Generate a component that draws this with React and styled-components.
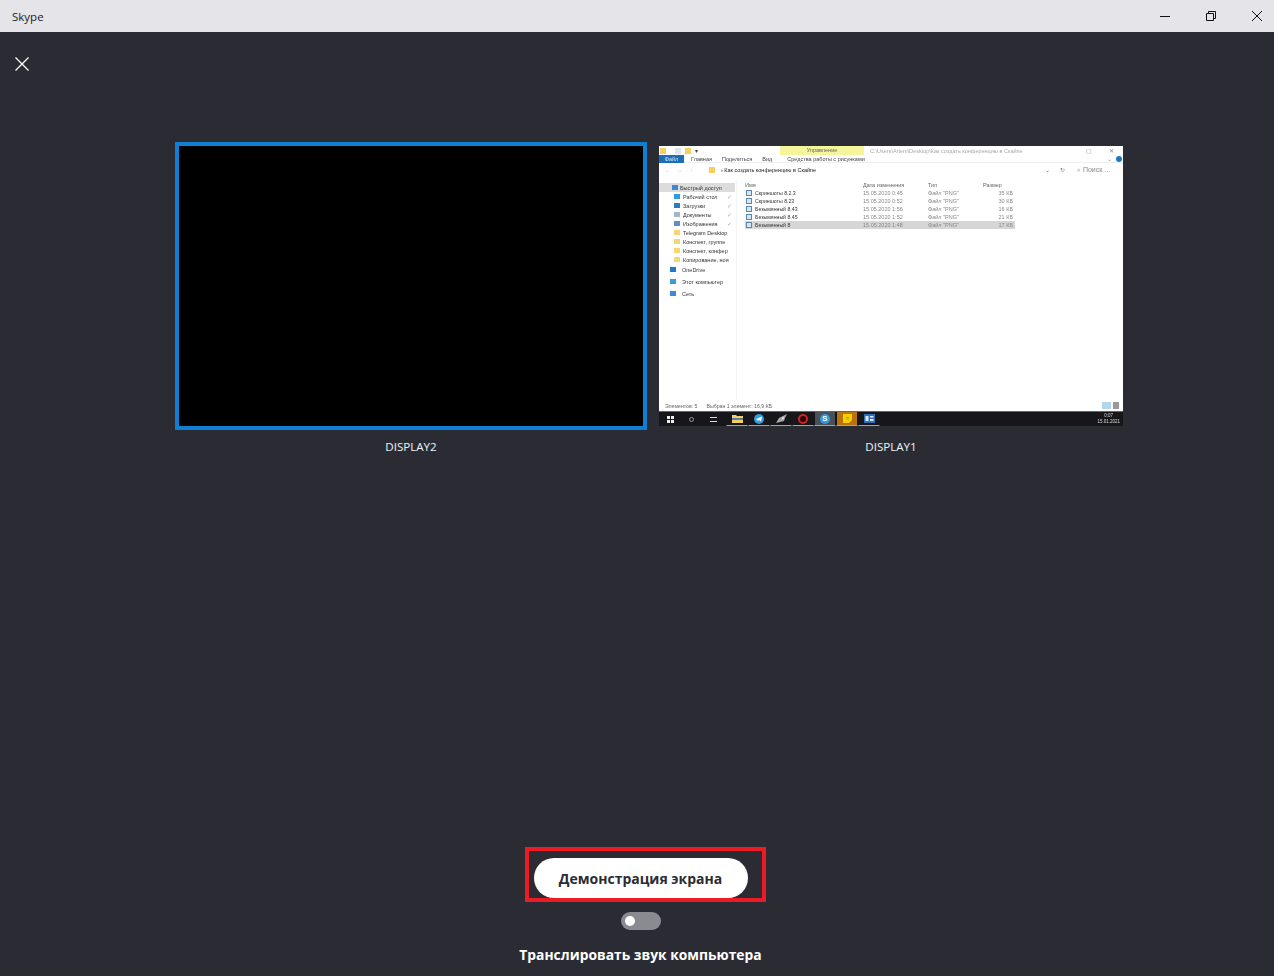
import styled, { createGlobalStyle } from "styled-components"

const sideItems = [
    { label: "Быстрый доступ", color: "#3b8ad8", level: 0, active: true },
    { label: "Рабочий стол", color: "#2f9be0", level: 1, pin: true },
    { label: "Загрузки", color: "#2b7cc8", level: 1, pin: true },
    { label: "Документы", color: "#9fb8cc", level: 1, pin: true },
    { label: "Изображения", color: "#5d90c0", level: 1, pin: true },
    { label: "Telegram Desktop", color: "#f4d774", level: 1 },
    { label: "Конспект, группе", color: "#f4d774", level: 1 },
    { label: "Конспект, конфер", color: "#f4d774", level: 1 },
    { label: "Копирование, ноя", color: "#f4d774", level: 1 },
]

const sideBottom = [
    { label: "OneDrive", color: "#1f78c8", level: 2, space: 1 },
    { label: "Этот компьютер", color: "#3b9bd8", level: 2, space: 3 },
    { label: "Сеть", color: "#3b8ad8", level: 2, space: 3 },
]

const files = [
    { name: "Скриншоты 8.2.3", date: "15.05.2020 0:45", size: "35 КБ" },
    { name: "Скриншоты 8.23", date: "15.05.2020 0:52", size: "30 КБ" },
    { name: "Безымянный 8.43", date: "15.05.2020 1:56", size: "16 КБ" },
    { name: "Безымянный 8.45", date: "15.05.2020 1:52", size: "21 КБ" },
    { name: "Безымянный 8", date: "15.05.2020 1:48", size: "17 КБ", selected: true },
]

const FolderGlyph = () => (
    <svg width="11" height="9" viewBox="0 0 11 9">
        <path d="M0 1h4l1 1h6v7H0z" fill="#f2cf63" />
        <path d="M0 4h11v2H0z" fill="#5a7fa8" />
    </svg>
)

const TelegramGlyph = () => (
    <svg width="10" height="10" viewBox="0 0 10 10">
        <circle cx="5" cy="5" r="5" fill="#2d9fe0" />
        <path d="M2 5l6-2.500-1 5-2-1.500-1 1z" fill="#fff" />
    </svg>
)

const BirdGlyph = () => (
    <svg width="11" height="10" viewBox="0 0 11 10">
        <path d="M0 9l3-5 4-2 4-2-2 4-1 3-4 1z" fill="#a8a8a8" />
        <circle cx="7" cy="4" r="1" fill="#e8e8e8" />
    </svg>
)

const OperaGlyph = () => (
    <svg width="10" height="10" viewBox="0 0 10 10">
        <ellipse cx="5" cy="5" rx="4" ry="4" fill="#2a0608" stroke="#d3221f" strokeWidth="2" />
    </svg>
)

const SkypeGlyph = () => (
    <SkypeCircle>S</SkypeCircle>
)

const NoteGlyph = () => (
    <svg width="9" height="9" viewBox="0 0 9 9">
        <path d="M0 0h9v6L6 9H0z" fill="#f6d000" />
        <path d="M3 5h3M3 3.500h3" stroke="#b8860b" strokeWidth=".7" />
    </svg>
)

const WordGlyph = () => (
    <svg width="11" height="9" viewBox="0 0 11 9">
        <path d="M0 0h11v9H0z" fill="#2f6fb8" />
        <path d="M1.500 2h3v5h-3zM6 2h3.500v1.500H6zM6 5h3.500v2H6z" fill="#dfeaf6" />
    </svg>
)

const taskIcons = [
    { glyph: <FolderGlyph /> },
    { glyph: <TelegramGlyph /> },
    { glyph: <BirdGlyph /> },
    { glyph: <OperaGlyph /> },
    { glyph: <SkypeGlyph />, bg: "#4b5057" },
    { glyph: <NoteGlyph />, bg: "#b8730f" },
    { glyph: <WordGlyph /> },
]

const App = () => {
    return (
        <>
            <GlobalStyle />
            <Window>
                <TitleBar>
                    <AppName>Skype</AppName>
                    <WindowButtons>
                        <svg width="12" height="12" viewBox="0 0 12 12">
                            <path d="M1 6.500h10" stroke="#111" fill="none" />
                        </svg>
                        <svg width="12" height="12" viewBox="0 0 12 12">
                            <path d="M1.500 3.500h7v7h-7zM3.500 3.500v-2h7v7h-2" stroke="#111" fill="none" />
                        </svg>
                        <svg width="12" height="12" viewBox="0 0 12 12">
                            <path d="M1 1l10 10M11 1L1 11" stroke="#111" fill="none" />
                        </svg>
                    </WindowButtons>
                </TitleBar>
                <Content>
                    <CloseButton>
                        <svg width="14" height="14" viewBox="0 0 14 14">
                            <path d="M.5.5l13 13M13.500.5l-13 13" stroke="#fff" strokeWidth="1.300" fill="none" />
                        </svg>
                    </CloseButton>
                    <Screens>
                        <ScreenItem>
                            <SelectedScreen />
                            <ScreenName>DISPLAY2</ScreenName>
                        </ScreenItem>
                        <ScreenItem>
                            <ExplorerShot>
                                <ShotTitle>
                                    <QuickIcons>
                                        <FolderMark />
                                        <FolderMark $color="#dfe6ee" />
                                        <FolderMark />
                                        <span>▾</span>
                                    </QuickIcons>
                                    <ContextTab>Управление</ContextTab>
                                    <ShotPath>C:\Users\Artem\Desktop\Как создать конференцию в Скайпе</ShotPath>
                                    <ShotControls>
                                        <span>▢</span>
                                        <span>✕</span>
                                    </ShotControls>
                                </ShotTitle>
                                <Ribbon>
                                    <FileTab>Файл</FileTab>
                                    <RibbonTab>Главная</RibbonTab>
                                    <RibbonTab>Поделиться</RibbonTab>
                                    <RibbonTab>Вид</RibbonTab>
                                    <RibbonTab>Средства работы с рисунками</RibbonTab>
                                    <RibbonEnd>
                                        <span>⌄</span>
                                        <HelpDot />
                                    </RibbonEnd>
                                </Ribbon>
                                <AddressRow>
                                    <NavArrows>←&nbsp;&nbsp;&nbsp;&nbsp;→&nbsp;&nbsp;&nbsp;&nbsp;&nbsp;↑</NavArrows>
                                    <FolderMark />
                                    <AddressText>› Как создать конференцию в Скайпе</AddressText>
                                    <AddressTools>
                                        <span>⌄</span>
                                        <span>↻</span>
                                    </AddressTools>
                                    <SearchBox>⌕ Поиск ...</SearchBox>
                                </AddressRow>
                                <ShotBody>
                                    <Sidebar>
                                        {sideItems.map((item) => (
                                            <SideRow key={item.label} $active={item.active} $level={item.level}>
                                                <SideIcon $color={item.color} />
                                                <span>{item.label}</span>
                                                {item.pin && <Pin>✓</Pin>}
                                            </SideRow>
                                        ))}
                                        {sideBottom.map((item) => (
                                            <SideRow key={item.label} $level={item.level} $space={item.space}>
                                                <SideIcon $color={item.color} />
                                                <span>{item.label}</span>
                                            </SideRow>
                                        ))}
                                    </Sidebar>
                                    <FileList>
                                        <FileHead>
                                            <span>Имя</span>
                                            <span>Дата изменения</span>
                                            <span>Тип</span>
                                            <span>Размер</span>
                                        </FileHead>
                                        {files.map((file) => (
                                            <FileRow key={file.name} $selected={file.selected}>
                                                <FileName>
                                                    <FileIcon />
                                                    {file.name}
                                                </FileName>
                                                <span>{file.date}</span>
                                                <span>Файл "PNG"</span>
                                                <FileSize>{file.size}</FileSize>
                                            </FileRow>
                                        ))}
                                    </FileList>
                                </ShotBody>
                                <StatusBar>
                                    <span>Элементов: 5</span>
                                    <span>Выбран 1 элемент: 16,9 КБ</span>
                                    <ViewButtons>
                                        <ViewButton $on />
                                        <ViewButton />
                                    </ViewButtons>
                                </StatusBar>
                                <Taskbar>
                                    <StartIcon>
                                        <i />
                                        <i />
                                        <i />
                                        <i />
                                    </StartIcon>
                                    <SearchIcon />
                                    <TaskView />
                                    <TaskIcons>
                                        {taskIcons.map((icon, i) => (
                                            <TaskSlot key={i} $bg={icon.bg}>
                                                {icon.glyph}
                                            </TaskSlot>
                                        ))}
                                    </TaskIcons>
                                    <Clock>
                                        0:07
                                        <br />
                                        15.01.2021
                                    </Clock>
                                </Taskbar>
                            </ExplorerShot>
                            <ScreenName>DISPLAY1</ScreenName>
                        </ScreenItem>
                    </Screens>
                    <Footer>
                        <ShareHighlight>
                            <ShareButton>Демонстрация экрана</ShareButton>
                        </ShareHighlight>
                        <Toggle />
                        <SoundLabel>Транслировать звук компьютера</SoundLabel>
                    </Footer>
                </Content>
            </Window>
        </>
    )
}

export default App

const GlobalStyle = createGlobalStyle`
    html, body {
        margin: 0;
        padding: 0;
        background: #fff;
    }

    * {
        box-sizing: border-box;
    }
`

const Window = styled.div`
    width: 1274px;
    height: 976px;
    display: flex;
    flex-direction: column;
    font-family: "Open Sans", "Noto Sans", sans-serif;
    background: #2b2c33;
`

const TitleBar = styled.header`
    height: 32px;
    flex: none;
    display: flex;
    align-items: center;
    justify-content: space-between;
    padding-left: 12px;
    background: #e4e4e9;
`

const AppName = styled.span`
    font-size: 11.5px;
    color: #1c1c1c;
`

const WindowButtons = styled.div`
    display: flex;
    align-items: center;
    gap: 34px;
    padding-right: 11px;
`

const Content = styled.main`
    flex: 1;
    display: flex;
    flex-direction: column;
    min-height: 0;
`

const CloseButton = styled.div`
    height: 14px;
    margin: 25px 0 0 15px;
    display: flex;
`

const Screens = styled.section`
    display: flex;
    gap: 12px;
    margin: 71px 0 0 175px;
`

const ScreenItem = styled.div`
    display: flex;
    flex-direction: column;
    align-items: center;
`

const SelectedScreen = styled.div`
    width: 472px;
    height: 288px;
    background: #000;
    border: 4px solid #0f7fd4;
`

const ScreenName = styled.div`
    margin-top: 9px;
    font-size: 11.6px;
    line-height: 16px;
    color: #f2f2f2;
`

const ExplorerShot = styled.div`
    width: 464px;
    height: 280px;
    margin-top: 4px;
    margin-bottom: 4px;
    display: flex;
    flex-direction: column;
    background: #fff;
    overflow: hidden;
    font-family: "Liberation Sans", sans-serif;
    font-size: 5.500px;
    color: #444;
    filter: blur(0.7px);
`

const ShotTitle = styled.div`
    height: 9px;
    flex: none;
    display: flex;
    align-items: center;
    padding-left: 1px;
`

const QuickIcons = styled.div`
    width: 120px;
    display: flex;
    align-items: center;
    gap: 4px;

    & > i:first-child {
        margin-right: 5px;
    }
`

const FolderMark = styled.i`
    width: 6px;
    height: 6px;
    flex: none;
    background: ${(p) => p.$color || "#f5cf62"};
`

const ContextTab = styled.div`
    width: 84px;
    height: 9px;
    flex: none;
    text-align: center;
    line-height: 9px;
    background: #f5f59b;
    color: #666;
`

const ShotPath = styled.div`
    flex: 1;
    padding-left: 6px;
    color: #aaa;
    white-space: nowrap;
`

const ShotControls = styled.div`
    display: flex;
    gap: 17px;
    margin-right: 9px;
    color: #888;
`

const Ribbon = styled.div`
    height: 8px;
    flex: none;
    display: flex;
    align-items: center;
    gap: 10px;
    border-bottom: 1px solid #eee;
`

const FileTab = styled.div`
    width: 25px;
    height: 8px;
    margin-right: -3px;
    line-height: 8px;
    text-align: center;
    background: #1a6fb8;
    color: #cfe2f2;
`

const RibbonTab = styled.span`
    color: #444;

    &:last-of-type {
        margin-left: 5px;
    }
`

const RibbonEnd = styled.div`
    display: flex;
    align-items: center;
    gap: 4px;
    margin-left: auto;
    margin-right: 1px;
    color: #999;
`

const HelpDot = styled.i`
    width: 6px;
    height: 6px;
    border-radius: 50%;
    background: #1a78c8;
`

const AddressRow = styled.div`
    height: 13px;
    margin-bottom: 4px;
    flex: none;
    display: flex;
    align-items: center;
    gap: 3px;
    padding-left: 6px;
`

const NavArrows = styled.span`
    width: 41px;
    color: #bbb;
    white-space: nowrap;
`

const AddressText = styled.span`
    flex: 1;
    padding-left: 3px;
    color: #222;
`

const AddressTools = styled.div`
    display: flex;
    gap: 10px;
    margin-right: 6px;
    color: #777;
`

const SearchBox = styled.div`
    width: 44px;
    margin-right: 5px;
    padding-left: 3px;
    font-size: 7px;
    color: #888;
    white-space: nowrap;
`

const ShotBody = styled.div`
    flex: 1;
    display: flex;
    min-height: 0;
`

const sidePadding = [13, 15, 11]
const sideGap = [2, 3, 6]

const Sidebar = styled.nav`
    width: 78px;
    flex: none;
    padding-top: 3px;
    display: flex;
    flex-direction: column;
    border-right: 1px solid #f4f4f4;
`

const SideRow = styled.div`
    height: 9px;
    flex: none;
    width: 76px;
    margin-top: ${(p) => p.$space || 0}px;
    padding-left: ${(p) => sidePadding[p.$level]}px;
    display: flex;
    align-items: center;
    gap: ${(p) => sideGap[p.$level]}px;
    white-space: nowrap;
    color: #333;
    background: ${(p) => (p.$active ? "#dcdcdc" : "transparent")};
`

const SideIcon = styled.i`
    width: 6px;
    height: 5px;
    flex: none;
    background: ${(p) => p.$color};
`

const Pin = styled.span`
    margin-left: auto;
    margin-right: 3px;
    color: #aaa;
`

const fileColumns = `grid-template-columns: 118px 65px 55px 32px;`

const FileList = styled.div`
    flex: 1;
    padding: 0 0 0 8px;
`

const FileHead = styled.div`
    height: 9px;
    display: grid;
    ${fileColumns}
    align-items: center;
    color: #666;
`

const FileRow = styled.div`
    height: 8px;
    width: 270px;
    display: grid;
    ${fileColumns}
    align-items: center;
    color: #888;
    background: ${(p) => (p.$selected ? "#d6d6d6" : "transparent")};
`

const FileName = styled.span`
    display: flex;
    align-items: center;
    gap: 3px;
    font-size: 5.200px;
    color: #333;
    white-space: nowrap;
`

const FileIcon = styled.i`
    width: 6px;
    height: 6px;
    flex: none;
    margin-left: 1px;
    border: 1px solid #5d86ab;
    background: #d5e6f3;
`

const FileSize = styled.span`
    text-align: right;
    padding-right: 2px;
`

const StatusBar = styled.div`
    height: 11px;
    flex: none;
    display: flex;
    align-items: center;
    gap: 9px;
    padding-left: 6px;
    font-size: 5.200px;
    color: #666;
`

const ViewButtons = styled.div`
    display: flex;
    gap: 2px;
    margin-left: auto;
    margin-right: 4px;
`

const ViewButton = styled.i`
    width: ${(p) => (p.$on ? 9 : 6)}px;
    height: 7px;
    background: ${(p) => (p.$on ? "#b4d6ec" : "#999")};
`

const Taskbar = styled.div`
    height: 15px;
    flex: none;
    display: flex;
    align-items: center;
    background: #17171b;
    border-top: 1px solid #666;
`

const StartIcon = styled.div`
    width: 7px;
    height: 7px;
    margin-left: 8px;
    display: grid;
    grid-template-columns: 1fr 1fr;
    gap: 1px;

    & > i {
        background: #f0f0f0;
    }
`

const SearchIcon = styled.i`
    width: 5px;
    height: 5px;
    margin-left: 15px;
    border: 1px solid #999;
    border-radius: 50%;
`

const TaskView = styled.i`
    width: 7px;
    height: 5px;
    margin-left: 16px;
    border-top: 1px solid #ddd;
    border-bottom: 1px solid #ddd;
`

const TaskIcons = styled.div`
    display: flex;
    margin-left: 9px;
    height: 100%;
`

const TaskSlot = styled.div`
    width: 22px;
    height: 100%;
    display: flex;
    align-items: center;
    justify-content: center;
    background: ${(p) => p.$bg || "transparent"};
    border-bottom: 1px solid #6fb3e0;
    border-left: 1px solid #17171b;
    border-right: 1px solid #17171b;
`

const SkypeCircle = styled.div`
    width: 10px;
    height: 10px;
    border-radius: 50%;
    background: #2f9be0;
    color: #fff;
    font-size: 8px;
    font-weight: 700;
    line-height: 10px;
    text-align: center;
`

const Clock = styled.div`
    margin-left: auto;
    margin-right: 3px;
    font-size: 4.500px;
    line-height: 6px;
    text-align: center;
    color: #ddd;
`

const Footer = styled.footer`
    margin-top: auto;
    display: flex;
    flex-direction: column;
    align-items: center;
    padding: 0 0 11px 7px;
`

const ShareHighlight = styled.div`
    width: 241px;
    height: 55px;
    margin-left: 9px;
    padding: 7px 14px 0 5px;
    border: 4px solid #ed1c24;
`

const ShareButton = styled.div`
    width: 214px;
    height: 40px;
    border-radius: 20px;
    background: #fff;
    color: #2b2c33;
    font-size: 14px;
    font-weight: 700;
    line-height: 41px;
    text-align: center;
`

const Toggle = styled.div`
    width: 40px;
    height: 18px;
    margin-top: 10px;
    padding: 4px 0 0 4px;
    border-radius: 9px;
    background: #8a8b90;

    &::before {
        content: "";
        display: block;
        width: 10px;
        height: 10px;
        border-radius: 50%;
        background: #fff;
    }
`

const SoundLabel = styled.div`
    margin-top: 15px;
    font-size: 13.850px;
    font-weight: 700;
    line-height: 20px;
    color: #fff;
`
